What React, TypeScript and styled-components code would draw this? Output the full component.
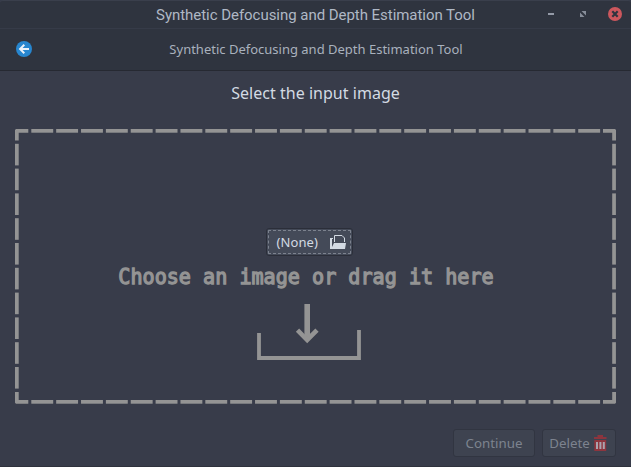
import React from "react";
import styled, { createGlobalStyle } from "styled-components";

const GlobalStyle = createGlobalStyle`
  * { box-sizing: border-box; }
  body { margin: 0; background: #383c4a; overflow: hidden; }
`;

const Window = styled.div`
  width: 631px;
  height: 467px;
  display: flex;
  flex-direction: column;
  background: #383c4a;
  border-bottom: 1px solid #2f323d;
  border-radius: 3px 3px 0 0;
  font-family: "Noto Sans", sans-serif;
`;

const Bar = styled.header<{ $height: number }>`
  height: ${(p) => p.$height}px;
  display: grid;
  grid-template-columns: 110px 1fr 110px;
  align-items: center;
  background: #2f343f;
`;

const TitleBar = styled(Bar)`
  border-top: 1px solid #3a3f4c;
  border-radius: 3px 3px 0 0;
`;

const HeaderBar = styled(Bar)`
  padding-bottom: 2px;
  border-top: 1px solid #363b48;
  border-bottom: 1px solid #262932;
`;

const WindowTitle = styled.div`
  grid-column: 2;
  text-align: center;
  white-space: nowrap;
  font: 15px/20px Roboto, sans-serif;
  letter-spacing: -0.04px;
  color: #afb8c5;
`;

const PageTitle = styled.div`
  text-align: center;
  white-space: nowrap;
  font-size: 13px;
  line-height: 18px;
  padding-left: 1px;
  color: #a9b1bd;
`;

const Icon = styled.svg`
  display: block;
  flex: none;
`;

const BackButton = styled.div`
  padding-left: 16px;
`;

const Controls = styled.div`
  display: flex;
  justify-content: flex-end;
  padding-right: 9px;
`;

const Heading = styled.h1`
  margin: 0;
  padding-top: 11px;
  height: 58px;
  text-align: center;
  font-size: 16px;
  line-height: 22px;
  font-weight: 400;
  letter-spacing: 0.03px;
  color: #d3dae3;
`;

const DropZone = styled.section`
  position: relative;
  width: 601px;
  height: 275px;
  margin-left: 15px;
  display: flex;
  flex-direction: column;
  align-items: center;
  padding: 99px 13px 0 0;
`;

const Outline = styled(Icon)`
  position: absolute;
  inset: 0;
`;

const FileButton = styled.button`
  width: 87px;
  height: 28px;
  padding: 0 6px 0 10px;
  display: flex;
  align-items: center;
  justify-content: space-between;
  border: 1px solid #2b2e39;
  border-radius: 3px;
  background: #444a58;
  outline: 1px dashed #7c828e;
  outline-offset: -3px;
  font: 13px "Noto Sans", sans-serif;
  letter-spacing: 0.1px;
  color: #d3dae3;
`;

const DropLabel = styled.div`
  margin-top: 7px;
  margin-right: 6px;
  width: 412px;
  flex: none;
  text-align: center;
  white-space: nowrap;
  font: 22px/28px "DejaVu Sans Mono", monospace;
  color: #949494;
  -webkit-text-stroke: 1.3px #949494;
  transform: scaleX(0.914);
`;

const TrayIcon = styled(Icon)`
  margin-top: 13px;
  margin-right: 1px;
`;

const Footer = styled.footer`
  display: flex;
  justify-content: flex-end;
  gap: 7px;
  padding: 25px 15px 0 0;
`;

const ActionButton = styled.button<{ $width: number }>`
  width: ${(p) => p.$width}px;
  height: 28px;
  padding: 0;
  display: flex;
  align-items: center;
  justify-content: center;
  gap: 4px;
  border: 1px solid #313541;
  border-radius: 3px;
  background: #3e4350;
  font: 13.3px "Noto Sans", sans-serif;
  color: #7d838f;
`;

const DeleteButton = styled(ActionButton)`
  padding-right: 2px;
`;

const PERIOD_X = 24.86;
const PERIOD_Y = 24.8;

function DashedOutline() {
  const columns = Array.from({ length: 23 }, (_, i) => 16.3 + i * PERIOD_X);
  const rows = Array.from({ length: 10 }, (_, i) => 14.8 + i * PERIOD_Y);
  return (
    <Outline width="601" height="275" viewBox="0 0 601 275" fill="#949494">
      {columns.map((x) => (
        <React.Fragment key={x}>
          <rect x={x} y="0" width="21.9" height="3.7" />
          <rect x={x} y="271" width="21.9" height="3.7" />
        </React.Fragment>
      ))}
      {rows.map((y) => (
        <React.Fragment key={y}>
          <rect x="0" y={y} width="3.7" height="21.6" />
          <rect x="597.2" y={y} width="3.7" height="21.6" />
        </React.Fragment>
      ))}
      <path d="M0 11.6V1L1 0H13.3V3.7H3.7V11.6Z" />
      <path d="M588 0H600L601 1V11.6H597.2V3.7H588Z" />
      <path d="M0 263V273.7L1 274.7H13.3V271H3.7V263Z" />
      <path d="M588 271H597.2V263H601V273.7L600 274.7H588Z" />
    </Outline>
  );
}

export default function App() {
  return (
    <>
      <GlobalStyle />
      <Window>
        <TitleBar $height={28}>
          <WindowTitle>Synthetic Defocusing and Depth Estimation Tool</WindowTitle>
          <Controls>
            <Icon width="78" height="16" viewBox="0 0 78 16">
              <path d="M4 6H10V8H4Z" fill="#949aa7" />
              <path d="M37.5 4H42V8.5ZM36 5.5L40.5 10H36Z" fill="#878d99" />
              <circle cx="71" cy="7" r="7" fill="#cc575d" />
              <path d="M68.3 4.3L73.7 9.7M73.7 4.3L68.3 9.7" stroke="#2f343f" strokeWidth="2.2" />
            </Icon>
          </Controls>
        </TitleBar>
        <HeaderBar $height={43}>
          <BackButton>
            <Icon width="16" height="16" viewBox="0 0 16 16">
              <circle cx="8" cy="8" r="8" fill="#2786cf" />
              <path d="M13 8H4.5M8.3 3.8L4.1 8L8.3 12.2" fill="none" stroke="#eaf2fa" strokeWidth="2" />
            </Icon>
          </BackButton>
          <PageTitle>Synthetic Defocusing and Depth Estimation Tool</PageTitle>
        </HeaderBar>
        <Heading>Select the input image</Heading>
        <DropZone>
          <DashedOutline />
          <FileButton>
            <span>(None)</span>
            <Icon width="16" height="14" viewBox="0 0 16 14">
              <path d="M0 3H3V4H2V12L4 8H16L15 14H0Z" fill="#d3dae3" />
              <path d="M4.5 7V.5H12L14.5 3V7" fill="none" stroke="#d3dae3" />
            </Icon>
          </FileButton>
          <DropLabel>Choose an image or drag it here</DropLabel>
          <TrayIcon width="104" height="56" viewBox="0 0 104 56" fill="none" stroke="#949494">
            <path d="M2 29V54H102V26" strokeWidth="3.8" />
            <path d="M50.2 0V36" strokeWidth="5.6" />
            <path d="M40.5 26.2L50.2 36L60 26.2" strokeWidth="4.6" />
          </TrayIcon>
        </DropZone>
        <Footer>
          <ActionButton $width={82}>Continue</ActionButton>
          <DeleteButton $width={74}>
            Delete
            <Icon width="13" height="16" viewBox="0 0 13 16">
              <path d="M3.5 0H9V2H12.5V4H0V2H3.5ZM.3 5H12.2V16H.3Z" fill="#8d353e" />
              <path d="M2 7H4V14H2ZM5.4 7H7.4V14H5.4ZM8.8 7H10.8V14H8.8Z" fill="#aaa3ad" />
            </Icon>
          </DeleteButton>
        </Footer>
      </Window>
    </>
  );
}
